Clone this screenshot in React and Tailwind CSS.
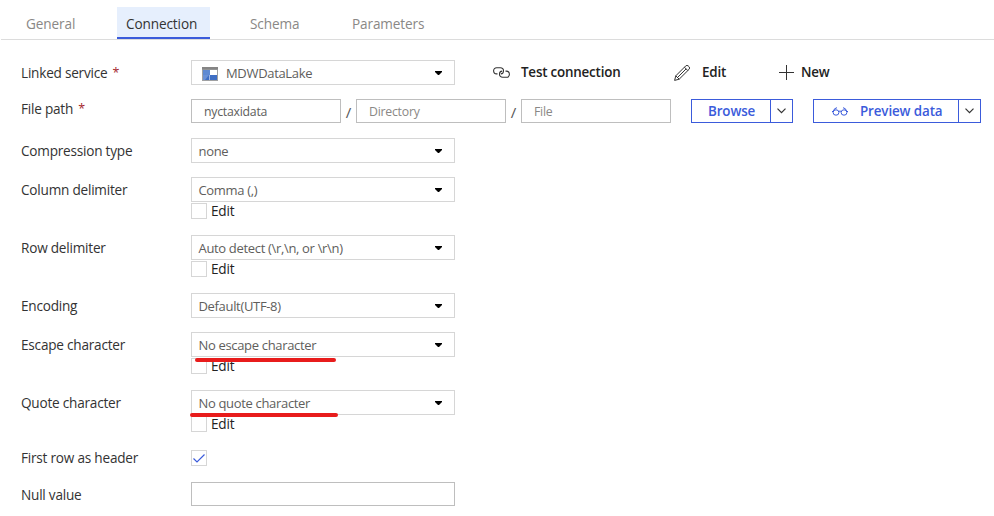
import React from 'react';

const tabs = [
  { name: 'General', box: 'w-[117px] pl-[25px]' },
  { name: 'Connection', box: 'w-[93px] pl-[9px]', active: true },
  { name: 'Schema', box: 'w-[102px] pl-[40px]' },
  { name: 'Parameters', box: 'w-[120px] pl-[40px]' },
];

function Row({ label, required, height = 'h-[39px]', labelBox = 'h-[27px]', children }) {
  return (
    <div className={`flex items-start ${height}`}>
      <div className={`flex w-[170px] shrink-0 items-center whitespace-pre text-[13.6px] tracking-[-0.22px] text-[#333] ${labelBox}`}>
        {label}
        {required && <span className="pl-[5px] text-[12.5px] text-[#a4262c]">*</span>}
      </div>
      {children}
    </div>
  );
}

function Select({ value, icon }) {
  return (
    <div className="flex h-[25px] w-[264px] items-center border border-[#d6d6d6] pl-[6.5px] pr-[12px]">
      {icon}
      <span className="flex-1 whitespace-nowrap pt-[2px] text-[13px] tracking-[-0.33px] text-[#605e5c]">{value}</span>
      <svg width="7" height="4" viewBox="0 0 7 4" className="fill-black">
        <path d="M0 0h7v1L4 4H3L0 1z" />
      </svg>
    </div>
  );
}

function EditBox() {
  return (
    <div className="mt-px flex h-4 items-center">
      <span className="h-4 w-4 border border-[#d6d6d6]" />
      <span className="pl-1 text-[13.6px] tracking-[-0.2px] text-[#222]">Edit</span>
    </div>
  );
}

function Chevron() {
  return (
    <svg width="9" height="6" viewBox="0 0 9 6" className="fill-none stroke-[#333]" strokeWidth="1.2">
      <path d="M.5 .7l4 4 4-4" />
    </svg>
  );
}

function SplitButton({ box, children }) {
  return (
    <div className={`flex h-6 border border-[#3b5bdb] ${box}`}>
      <div className="flex flex-1 items-center whitespace-nowrap text-[13.4px] font-semibold tracking-[-0.12px] text-[#3b5bdb]">
        {children}
      </div>
      <div className="flex w-[22px] items-center justify-center border-l border-[#3b5bdb] pr-px">
        <Chevron />
      </div>
    </div>
  );
}

function StorageIcon() {
  return (
    <svg width="16" height="14" viewBox="0 0 16 14" className="ml-[3.5px] mr-2 mt-[2px]">
      <path fill="#a0a1a2" d="M0 0h16v14H0z" />
      <path fill="#858585" d="M0 0h16v2.500H0z" />
      <path fill="#5f8ad2" d="M1 3h7v5H1z" />
      <path fill="#fff" d="M8 3h7v5H8z" />
      <path fill="#3f6fc4" d="M1 8h14v5H1z" />
      <path fill="#6b92d6" d="M1 8h6l-4 5H1z" />
      <path fill="#a0b8e4" d="M7 8h1v5H7z" />
    </svg>
  );
}

export default function App() {
  return (
    <main className="h-[516px] w-[994px] overflow-hidden bg-white font-['Open_Sans','Noto_Sans',sans-serif]">
      <nav className="ml-px flex h-10 items-end border-b border-[#dcdcdc]">
        {tabs.map((t) => (
          <div
            key={t.name}
            className={`flex h-8 items-center whitespace-nowrap text-[13.6px] tracking-[-0.12px] ${t.box} ${
              t.active ? '-ml-px border-b-2 border-[#3b5bdb] bg-[#e6effd] pt-[5px] text-[#333]' : 'pt-[3px] text-[#8a8886]'
            }`}
          >
            {t.name}
          </div>
        ))}
      </nav>

      <div className="pl-[21px] pt-[20px]">
        <Row label="Linked service" required>
          <Select value="MDWDataLake" icon={<StorageIcon />} />
          <div className="flex h-[25px] items-center whitespace-nowrap pl-[38px] text-[13.4px] font-semibold tracking-[-0.2px] text-[#222]">
            <svg width="17" height="11" viewBox="0 0 17 11" className="mr-[11px] fill-none stroke-[#333]" strokeWidth="1.1">
              <path d="M4.500 6.900H3.700C1.900 6.900.6 5.600.6 3.800S1.900.7 3.700.7h3.600c1.900 0 3.200 1.300 3.200 3.100S9.200 6.900 7.900 6.900" />
              <path d="M12.500 4.100h.8c1.800 0 3.100 1.300 3.100 3.100s-1.300 3.100-3.100 3.100H9.700c-1.900 0-3.200-1.300-3.200-3.100S7.800 4.100 9.100 4.100" />
            </svg>
            <span className="w-[153px]">Test connection</span>
            <svg width="16" height="16" viewBox="0 0 16 16" className="mr-[12px] fill-none stroke-[#333]" strokeWidth="1">
              <path d="M.6 15.400l1.200-4.600L11.600 1a1.900 1.900 0 0 1 2.700 0l.7.7a1.900 1.900 0 0 1 0 2.700L5.200 14.200zM1.800 10.800l3.400 3.400M10.400 2.200l3.400 3.400M3.500 12.500l8.600-8.600" />
            </svg>
            <span className="w-[77px]">Edit</span>
            <svg width="15" height="15" viewBox="0 0 15 15" className="mr-[7px] fill-none stroke-[#333]" strokeWidth="1">
              <path d="M7.500 0v15M0 7.500h15" />
            </svg>
            <span>New</span>
          </div>
        </Row>

        <Row label="File path" required labelBox="h-[20px]">
          <div className="flex h-6 items-center text-[12.3px] tracking-[-0.25px] text-[#8a8886]">
            <div className="flex h-6 w-[150px] items-center border border-[#bebebe] pl-3 pt-[2px] text-[#605e5c]">nyctaxidata</div>
            <span className="w-[15px] pt-[2px] text-center text-[15px] text-[#555]">/</span>
            <div className="flex h-6 w-[150px] items-center border border-[#bebebe] pl-3 pt-[2px]">Directory</div>
            <span className="w-[15px] pt-[2px] text-center text-[15px] text-[#555]">/</span>
            <div className="flex h-6 w-[150px] items-center border border-[#bebebe] pl-3 pt-[2px]">File</div>
          </div>
          <div className="flex gap-5 pl-5">
            <SplitButton box="w-[102px] pl-[16px]">
              <span className="pt-px">Browse</span>
            </SplitButton>
            <SplitButton box="w-[168px] pl-[18px]">
              <svg width="16" height="9" viewBox="0 0 16 9" className="mr-[12px] fill-none stroke-[#3b5bdb]" strokeWidth="1">
                <ellipse cx="4" cy="5.500" rx="2.900" ry="2.700" />
                <ellipse cx="12" cy="5.500" rx="2.900" ry="2.700" />
                <path d="M0 4.500h1.500M14.500 4.500H16M6.600 4.500q1.400-1 2.800 0M1.300 4.500Q2 1 5 .7M14.700 4.500Q14 1 11 .7" />
              </svg>
              <span className="pt-px">Preview data</span>
            </SplitButton>
          </div>
        </Row>

        <Row label="Compression type">
          <Select value="none" />
        </Row>
        <Row label="Column delimiter" height="h-[58px]">
          <div>
            <Select value="Comma (,)" />
            <EditBox />
          </div>
        </Row>
        <Row label="Row delimiter" height="h-[58px]">
          <div>
            <Select value="Auto detect (\r,\n, or \r\n)" />
            <EditBox />
          </div>
        </Row>
        <Row label="Encoding">
          <Select value="Default(UTF-8)" />
        </Row>
        <Row label="Escape character" height="h-[58px]">
          <div className="relative">
            <Select value="No escape character" />
            <EditBox />
            <span className="absolute left-[4px] top-[26px] h-1 w-[141px] rounded-full bg-[#e81c1c]" />
          </div>
        </Row>
        <Row label="Quote character" height="h-[60px]">
          <div className="relative">
            <Select value="No quote character" />
            <EditBox />
            <span className="absolute left-[-1px] top-[23px] h-1 w-[148px] rounded-full bg-[#e81c1c]" />
          </div>
        </Row>
        <Row label="First row as header" height="h-[32px]" labelBox="h-[16px]">
          <div className="flex h-4 w-4 items-center justify-center border border-[#d6d6d6]">
            <svg width="12" height="9" viewBox="0 0 12 9" className="fill-none stroke-[#3b5bdb]" strokeWidth="1.2">
              <path d="M.5 4.500L4 8 11.500.5" />
            </svg>
          </div>
        </Row>
        <Row label="Null value" height="h-6" labelBox="h-[26px]">
          <div className="h-6 w-[264px] border border-[#bebebe]" />
        </Row>
      </div>
    </main>
  );
}
